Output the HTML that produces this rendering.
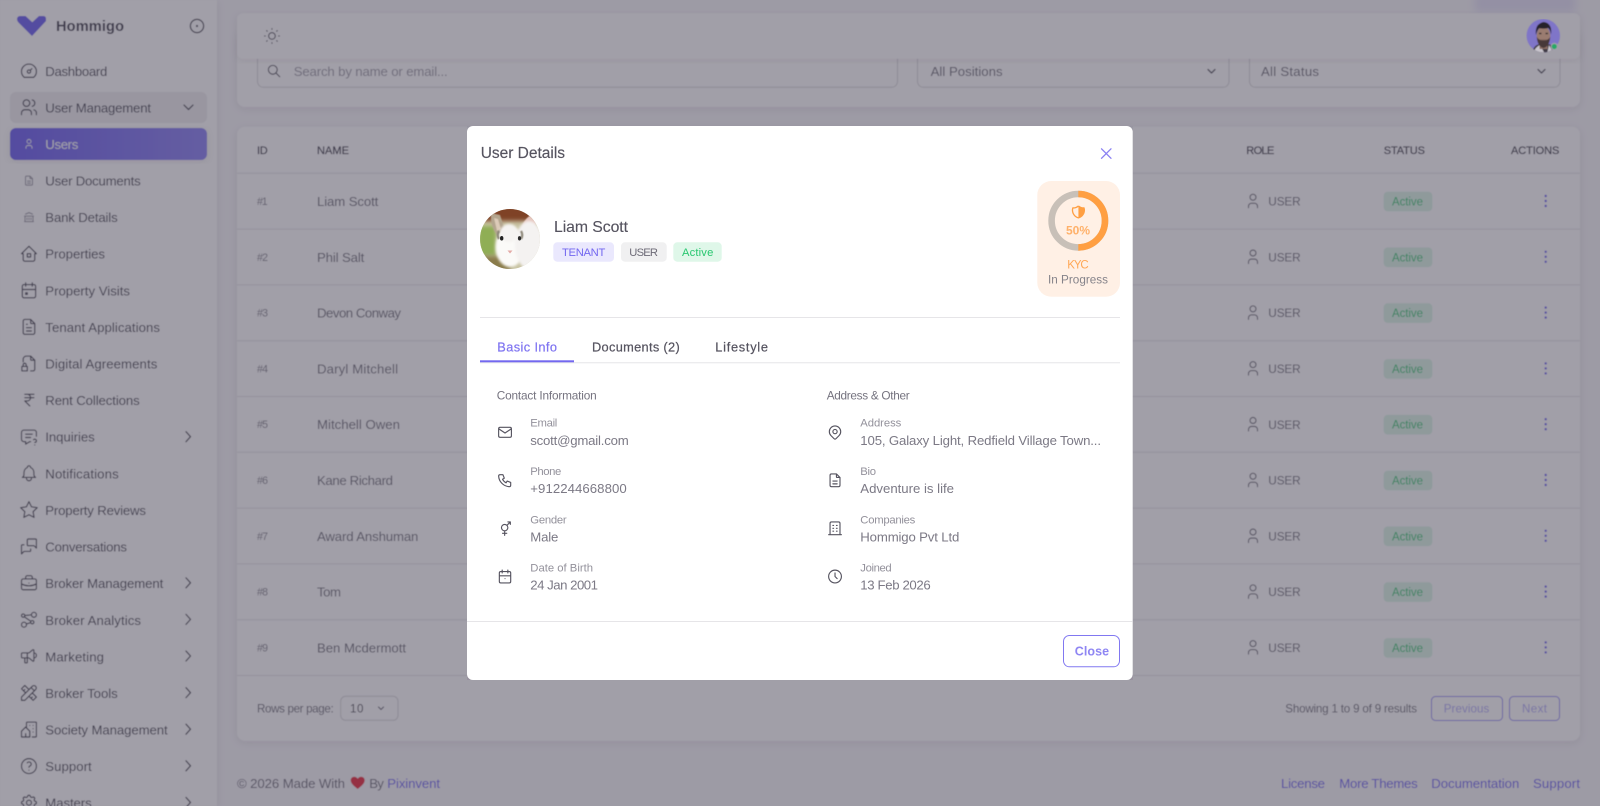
<!DOCTYPE html>
<html><head><meta charset="utf-8"><title>User Details</title>
<style>
html,body{margin:0;padding:0;width:1600px;height:806px;overflow:hidden;background:#f8f7fa}
svg{display:block;font-family:"Liberation Sans",sans-serif}
.i{fill:none;stroke:#4e4c5a;stroke-width:1.4;stroke-linecap:round;stroke-linejoin:round}
.s{fill:none;stroke:#6d6b77;stroke-width:1.4;stroke-linecap:round;stroke-linejoin:round}
.g{fill:none;stroke:#55535f;stroke-width:1.25;stroke-linecap:round;stroke-linejoin:round}
.m{fill:none;stroke:#55535f;stroke-width:1.6;stroke-linecap:round;stroke-linejoin:round}
.n{font-size:13.2px;fill:#4e4c5a}
.h{font-size:11px;fill:#4e4c5a;stroke:#4e4c5a;stroke-width:.25}
.t{font-size:13.2px;fill:#75737f}
.u{font-size:11.8px;fill:#75737f}
.id{font-size:10.6px;fill:#8a8893}
.a{font-size:11.5px;fill:#28c76f;fill-opacity:.9}
.sm{font-size:11.6px;fill:#75737f}
.l{font-size:11.3px;fill:#93919b}
.v{font-size:13.2px;fill:#7b7985}
.p{font-size:13.2px;fill:#7367f0}
.tb{font-size:12.8px;stroke-width:.2;letter-spacing:.3px}
.bd{font-size:11.2px}
.sec{font-size:11.8px;fill:#75737f}
</style></head><body>
<svg width="1600" height="806" viewBox="0 0 1600 806" xmlns="http://www.w3.org/2000/svg">
<defs>
<filter id="sh" x="-5%" y="-5%" width="110%" height="115%"><feDropShadow dx="0" dy="2" stdDeviation="4" flood-color="#2f2b3d" flood-opacity=".08"/></filter>
<filter id="ms" x="-5%" y="-5%" width="110%" height="110%"><feDropShadow dx="0" dy="3" stdDeviation="6" flood-color="#2f2b3d" flood-opacity=".22"/></filter>
<filter id="b4" x="-30%" y="-30%" width="160%" height="160%"><feGaussianBlur stdDeviation="4"/></filter>
<filter id="b2" x="-30%" y="-30%" width="160%" height="160%"><feGaussianBlur stdDeviation="2"/></filter>
<filter id="b1" x="-30%" y="-30%" width="160%" height="160%"><feGaussianBlur stdDeviation="1.2"/></filter>
<filter id="b05" x="-30%" y="-30%" width="160%" height="160%"><feGaussianBlur stdDeviation=".6"/></filter>
<filter id="soft" x="0" y="0" width="100%" height="100%"><feGaussianBlur stdDeviation=".4"/></filter>
<filter id="soft2" x="0" y="0" width="100%" height="100%"><feGaussianBlur stdDeviation=".22"/></filter>
<linearGradient id="act" x1="0" x2="1"><stop offset="0" stop-color="#7367f0"/><stop offset="1" stop-color="#9289f4"/></linearGradient>
<clipPath id="ca"><circle cx="510" cy="239" r="30"/></clipPath>
<clipPath id="cm"><circle cx="1543.3" cy="35.7" r="16.7"/></clipPath>
</defs>

<g filter="url(#soft)">
<rect width="1600" height="806" fill="#f8f7fa"/>
<rect x="1475" y="-6" width="100" height="18" fill="#e6e3f8" filter="url(#b4)"/>

<rect x="237" y="30" width="1343" height="77" rx="8" fill="#fff" filter="url(#sh)"/>
<rect x="257.5" y="45" width="640" height="42.3" rx="6" fill="#fff" stroke="#dcdbde"/>
<rect x="917.5" y="45" width="311.5" height="42.3" rx="6" fill="#fff" stroke="#dcdbde"/>
<rect x="1249.5" y="45" width="310.5" height="42.3" rx="6" fill="#fff" stroke="#dcdbde"/>
<g class="g" style="stroke-width:1.7" transform="translate(266.5,63.5) scale(.63)"><path d="M3 10a7 7 0 1 0 14 0a7 7 0 1 0-14 0M21 21l-6-6"/></g>
<text x="293.7" y="76.2" class="t" style="fill:#a3a1ab" textLength="154">Search by name or email...</text>
<text x="930.6" y="76.2" class="t" textLength="72">All Positions</text>
<text x="1261" y="76.2" class="t" textLength="58">All Status</text>
<path d="M1208 69.5l3.500 3.500l3.500-3.500M1538 69.500l3.500 3.500l3.500-3.500" class="g"/>

<rect x="237" y="13.3" width="1343" height="45.4" rx="6" fill="#fff" filter="url(#sh)"/>
<g class="g" transform="translate(262,26) scale(.83)"><path d="M8 12a4 4 0 1 0 8 0a4 4 0 1 0-8 0M3 12h1M12 3v1M20 12h1M12 20v1M5.6 5.6l.7.7M18.4 5.6l-.7.7M17.7 17.7l.7.7M6.3 17.7l-.7.7"/></g>

<rect x="237" y="126.7" width="1343" height="614" rx="8" fill="#fff" filter="url(#sh)"/>
<text x="257" y="154.2" class="h" textLength="10.7">ID</text>
<text x="317" y="154.2" class="h" textLength="32">NAME</text>
<text x="1246.3" y="154.2" class="h" textLength="28">ROLE</text>
<text x="1383.7" y="154.2" class="h" textLength="41.3">STATUS</text>
<text x="1511" y="154.2" class="h" textLength="48.3">ACTIONS</text>
<path d="M237 173.3H1580M237 229.1H1580M237 284.9H1580M237 340.7H1580M237 396.5H1580M237 452.3H1580M237 508.1H1580M237 563.9H1580M237 619.7H1580M237 675.5H1580" stroke="#e8e7ea" fill="none"/>

<g><text x="257" y="205" class="id" textLength="10.7">#1</text><text x="317" y="206" class="t" textLength="61.3">Liam Scott</text><g class="s" transform="translate(1244,192) scale(.75)"><path d="M8 7a4 4 0 1 0 8 0a4 4 0 1 0-8 0M6 21v-2a4 4 0 0 1 4-4h4a4 4 0 0 1 4 4v2"/></g><text x="1268.3" y="205.6" class="u" textLength="32.4">USER</text><rect x="1383.7" y="191.7" width="48.6" height="19.6" rx="4" fill="#def6e8"/><text x="1392" y="205.5" class="a" textLength="31">Active</text><path d="M1545.7 196v.01M1545.7 201v.01M1545.7 206v.01" stroke="#7367f0" stroke-width="2.4" stroke-linecap="round"/></g>
<g transform="translate(0,55.8)"><text x="257" y="205" class="id" textLength="11">#2</text><text x="317" y="206" class="t" textLength="47.3">Phil Salt</text><g class="s" transform="translate(1244,192) scale(.75)"><path d="M8 7a4 4 0 1 0 8 0a4 4 0 1 0-8 0M6 21v-2a4 4 0 0 1 4-4h4a4 4 0 0 1 4 4v2"/></g><text x="1268.3" y="205.6" class="u" textLength="32.4">USER</text><rect x="1383.7" y="191.7" width="48.6" height="19.6" rx="4" fill="#def6e8"/><text x="1392" y="205.5" class="a" textLength="31">Active</text><path d="M1545.7 196v.01M1545.7 201v.01M1545.7 206v.01" stroke="#7367f0" stroke-width="2.4" stroke-linecap="round"/></g>
<g transform="translate(0,111.6)"><text x="257" y="205" class="id" textLength="11">#3</text><text x="317" y="206" class="t" textLength="84">Devon Conway</text><g class="s" transform="translate(1244,192) scale(.75)"><path d="M8 7a4 4 0 1 0 8 0a4 4 0 1 0-8 0M6 21v-2a4 4 0 0 1 4-4h4a4 4 0 0 1 4 4v2"/></g><text x="1268.3" y="205.6" class="u" textLength="32.4">USER</text><rect x="1383.7" y="191.7" width="48.6" height="19.6" rx="4" fill="#def6e8"/><text x="1392" y="205.5" class="a" textLength="31">Active</text><path d="M1545.7 196v.01M1545.7 201v.01M1545.7 206v.01" stroke="#7367f0" stroke-width="2.4" stroke-linecap="round"/></g>
<g transform="translate(0,167.4)"><text x="257" y="205" class="id" textLength="11">#4</text><text x="317" y="206" class="t" textLength="81">Daryl Mitchell</text><g class="s" transform="translate(1244,192) scale(.75)"><path d="M8 7a4 4 0 1 0 8 0a4 4 0 1 0-8 0M6 21v-2a4 4 0 0 1 4-4h4a4 4 0 0 1 4 4v2"/></g><text x="1268.3" y="205.6" class="u" textLength="32.4">USER</text><rect x="1383.7" y="191.7" width="48.6" height="19.6" rx="4" fill="#def6e8"/><text x="1392" y="205.5" class="a" textLength="31">Active</text><path d="M1545.7 196v.01M1545.7 201v.01M1545.7 206v.01" stroke="#7367f0" stroke-width="2.4" stroke-linecap="round"/></g>
<g transform="translate(0,223.2)"><text x="257" y="205" class="id" textLength="11">#5</text><text x="317" y="206" class="t" textLength="83">Mitchell Owen</text><g class="s" transform="translate(1244,192) scale(.75)"><path d="M8 7a4 4 0 1 0 8 0a4 4 0 1 0-8 0M6 21v-2a4 4 0 0 1 4-4h4a4 4 0 0 1 4 4v2"/></g><text x="1268.3" y="205.6" class="u" textLength="32.4">USER</text><rect x="1383.7" y="191.7" width="48.6" height="19.6" rx="4" fill="#def6e8"/><text x="1392" y="205.5" class="a" textLength="31">Active</text><path d="M1545.7 196v.01M1545.7 201v.01M1545.7 206v.01" stroke="#7367f0" stroke-width="2.4" stroke-linecap="round"/></g>
<g transform="translate(0,279)"><text x="257" y="205" class="id" textLength="11">#6</text><text x="317" y="206" class="t" textLength="76">Kane Richard</text><g class="s" transform="translate(1244,192) scale(.75)"><path d="M8 7a4 4 0 1 0 8 0a4 4 0 1 0-8 0M6 21v-2a4 4 0 0 1 4-4h4a4 4 0 0 1 4 4v2"/></g><text x="1268.3" y="205.6" class="u" textLength="32.4">USER</text><rect x="1383.7" y="191.7" width="48.6" height="19.6" rx="4" fill="#def6e8"/><text x="1392" y="205.5" class="a" textLength="31">Active</text><path d="M1545.7 196v.01M1545.7 201v.01M1545.7 206v.01" stroke="#7367f0" stroke-width="2.4" stroke-linecap="round"/></g>
<g transform="translate(0,334.8)"><text x="257" y="205" class="id" textLength="11">#7</text><text x="317" y="206" class="t" textLength="101.4">Award Anshuman</text><g class="s" transform="translate(1244,192) scale(.75)"><path d="M8 7a4 4 0 1 0 8 0a4 4 0 1 0-8 0M6 21v-2a4 4 0 0 1 4-4h4a4 4 0 0 1 4 4v2"/></g><text x="1268.3" y="205.6" class="u" textLength="32.4">USER</text><rect x="1383.7" y="191.7" width="48.6" height="19.6" rx="4" fill="#def6e8"/><text x="1392" y="205.5" class="a" textLength="31">Active</text><path d="M1545.7 196v.01M1545.7 201v.01M1545.7 206v.01" stroke="#7367f0" stroke-width="2.4" stroke-linecap="round"/></g>
<g transform="translate(0,390.6)"><text x="257" y="205" class="id" textLength="11">#8</text><text x="317" y="206" class="t" textLength="24">Tom</text><g class="s" transform="translate(1244,192) scale(.75)"><path d="M8 7a4 4 0 1 0 8 0a4 4 0 1 0-8 0M6 21v-2a4 4 0 0 1 4-4h4a4 4 0 0 1 4 4v2"/></g><text x="1268.3" y="205.6" class="u" textLength="32.4">USER</text><rect x="1383.7" y="191.7" width="48.6" height="19.6" rx="4" fill="#def6e8"/><text x="1392" y="205.5" class="a" textLength="31">Active</text><path d="M1545.7 196v.01M1545.7 201v.01M1545.7 206v.01" stroke="#7367f0" stroke-width="2.4" stroke-linecap="round"/></g>
<g transform="translate(0,446.4)"><text x="257" y="205" class="id" textLength="11">#9</text><text x="317" y="206" class="t" textLength="89">Ben Mcdermott</text><g class="s" transform="translate(1244,192) scale(.75)"><path d="M8 7a4 4 0 1 0 8 0a4 4 0 1 0-8 0M6 21v-2a4 4 0 0 1 4-4h4a4 4 0 0 1 4 4v2"/></g><text x="1268.3" y="205.6" class="u" textLength="32.4">USER</text><rect x="1383.7" y="191.7" width="48.6" height="19.6" rx="4" fill="#def6e8"/><text x="1392" y="205.5" class="a" textLength="31">Active</text><path d="M1545.7 196v.01M1545.7 201v.01M1545.7 206v.01" stroke="#7367f0" stroke-width="2.4" stroke-linecap="round"/></g>

<text x="257" y="712.4" class="sm" textLength="76.7">Rows per page:</text>
<rect x="340.7" y="696.3" width="57.3" height="24" rx="5" fill="#fff" stroke="#dcdbde"/>
<text x="350" y="712.6" class="sm" style="fill:#55535f" textLength="13.5">10</text>
<path d="M378.5 707l2.5 2.5l2.5-2.5" class="s" style="stroke-width:1.1"/>
<text x="1285.3" y="712.4" class="sm" textLength="131.7">Showing 1 to 9 of 9 results</text>
<rect x="1431.5" y="696.5" width="71" height="24" rx="4" fill="#fff" stroke="#9a92f4"/>
<rect x="1509.5" y="696.5" width="50" height="24" rx="4" fill="#fff" stroke="#9a92f4"/>
<text x="1443.7" y="712.6" class="sm" style="fill:#b5b0f7" textLength="45.6">Previous</text>
<text x="1522" y="712.6" class="sm" style="fill:#b5b0f7" textLength="25">Next</text>

<text x="237" y="788" class="t" textLength="108">© 2026 Made With</text>
<path d="M357.7 789c-4-3.2-7-5.6-7-8.8c0-2 1.5-3.5 3.5-3.5c1.4 0 2.8.8 3.5 2c.7-1.2 2.1-2 3.5-2c2 0 3.5 1.5 3.5 3.5c0 3.2-3 5.6-7 8.8z" fill="#ea3546"/>
<text x="369.3" y="788" class="t" textLength="14.5">By</text>
<text x="387.3" y="788" class="p" textLength="52.7">Pixinvent</text>
<text x="1281" y="788" class="p" textLength="44">License</text>
<text x="1339.3" y="788" class="p" textLength="78.4">More Themes</text>
<text x="1431.3" y="788" class="p" textLength="88">Documentation</text>
<text x="1533" y="788" class="p" textLength="47">Support</text>

<rect x="0" y="0" width="217" height="806" fill="#fff" filter="url(#sh)"/>
<path d="M17 19a3 3 0 0 1 3-3h5.5l6.8 6.2L39 16h4.5a2.5 2.5 0 0 1 2.5 2.6V21L32 36L18.5 22.5q-1.5-1.5-1.5-3.5z" fill="#7367f0"/>
<text x="56" y="31" font-size="14.6" font-weight="700" fill="#4e4c5a" textLength="68">Hommigo</text>
<circle cx="197" cy="26" r="6.6" class="g"/><circle cx="197" cy="26" r="1.1" fill="#55535f"/>

<rect x="10" y="92" width="197" height="31" rx="6" fill="#f0eff1"/>
<rect x="10" y="128" width="197" height="32" rx="6" fill="url(#act)" filter="url(#sh)"/>

<g transform="translate(0,-.5) scale(1,.9982)">
<text x="45.3" y="76.4" class="n" textLength="62">Dashboard</text>
<text x="45.3" y="113" class="n" textLength="105.7">User Management</text>
<text x="45.3" y="149.7" class="n" style="fill:#fff" textLength="33">Users</text>
<text x="45.3" y="186.4" class="n" textLength="95.4">User Documents</text>
<text x="45.3" y="223" class="n" textLength="72.4">Bank Details</text>
<text x="45.3" y="259.7" class="n" textLength="59.7">Properties</text>
<text x="45.3" y="296.4" class="n" textLength="84.7">Property Visits</text>
<text x="45.3" y="333" class="n" textLength="114.7">Tenant Applications</text>
<text x="45.3" y="369.7" class="n" textLength="112">Digital Agreements</text>
<text x="45.3" y="406.4" class="n" textLength="94.4">Rent Collections</text>
<text x="45.3" y="443" class="n" textLength="49.4">Inquiries</text>
<text x="45.3" y="479.7" class="n" textLength="73.4">Notifications</text>
<text x="45.3" y="516.4" class="n" textLength="100.7">Property Reviews</text>
<text x="45.3" y="553" class="n" textLength="81.7">Conversations</text>
<text x="45.3" y="589.7" class="n" textLength="118">Broker Management</text>
<text x="45.3" y="626.4" class="n" textLength="95.7">Broker Analytics</text>
<text x="45.3" y="663" class="n" textLength="58.7">Marketing</text>
<text x="45.3" y="699.7" class="n" textLength="72.4">Broker Tools</text>
<text x="45.3" y="736.4" class="n" textLength="122.4">Society Management</text>
<text x="45.3" y="773" class="n" textLength="46.4">Support</text>
<text x="45.3" y="809.7" class="n" textLength="46.4">Masters</text>

<g class="i">
<g transform="translate(19,61.4) scale(.83)"><path d="M10 13a2 2 0 1 0 4 0a2 2 0 1 0-4 0M13.45 11.55L15.5 9.5M6.4 20a9 9 0 1 1 11.2 0z"/></g>
<g transform="translate(19,98) scale(.83)"><path d="M5 7a4 4 0 1 0 8 0a4 4 0 1 0-8 0M3 21v-2a4 4 0 0 1 4-4h4a4 4 0 0 1 4 4v2M16 3.13a4 4 0 0 1 0 7.75M21 21v-2a4 4 0 0 0-3-3.85"/></g>
<g transform="translate(19,244.7) scale(.83)"><path d="M5 12H3l9-9l9 9h-2M5 12v7a2 2 0 0 0 2 2h10a2 2 0 0 0 2-2v-7M10 12h4v4h-4z"/></g>
<g transform="translate(19,281.4) scale(.83)"><path d="M4 7a2 2 0 0 1 2-2h12a2 2 0 0 1 2 2v12a2 2 0 0 1-2 2H6a2 2 0 0 1-2-2zM16 3v4M8 3v4M4 11h16M8 15h2v2H8z"/></g>
<g transform="translate(19,318) scale(.83)"><path d="M14 3v4a1 1 0 0 0 1 1h4M17 21H7a2 2 0 0 1-2-2V5a2 2 0 0 1 2-2h7l5 5v11a2 2 0 0 1-2 2zM9 9h1M9 13h6M9 17h6"/></g>
<g transform="translate(19,354.7) scale(.83)"><path d="M9 3h5l5 5v11a2 2 0 0 1-2 2h-3M14 3v4a1 1 0 0 0 1 1h4M9 3a4 4 0 0 0-4 4v3M3.5 15.5h6.5v5.5H3.5zM5 15.5v-2a1.8 1.8 0 0 1 3.6 0v2"/></g>
<g transform="translate(19,391.4) scale(.83)"><path d="M18 5H7h3a4 4 0 0 1 0 8H7l6 6M7 9h11"/></g>
<g transform="translate(19,428) scale(.83)"><path d="M8 9h8M8 13h6M14 18h-1l-5 3v-3H6a3 3 0 0 1-3-3V7a3 3 0 0 1 3-3h12a3 3 0 0 1 3 3v4.5M19 22v.01M19 19a2 2 0 0 0 .914-3.782a1.98 1.98 0 0 0-2.414.483"/></g>
<g transform="translate(19,464.7) scale(.83)"><path d="M10 5a2 2 0 1 1 4 0a7 7 0 0 1 4 6v3a4 4 0 0 0 2 3H4a4 4 0 0 0 2-3v-3a7 7 0 0 1 4-6M9 17v1a3 3 0 0 0 6 0v-1"/></g>
<g transform="translate(19,501.4) scale(.83)"><path d="M12 17.75l-6.172 3.245l1.179-6.873l-5-4.867l6.9-1l3.086-6.253l3.086 6.253l6.9 1l-5 4.867l1.179 6.873z"/></g>
<g transform="translate(19,538) scale(.83)"><path d="M21 14l-3-3h-7a1 1 0 0 1-1-1V4a1 1 0 0 1 1-1h9a1 1 0 0 1 1 1v10M14 15v2a1 1 0 0 1-1 1H6l-3 3V11a1 1 0 0 1 1-1h2"/></g>
<g transform="translate(19,574.7) scale(.83)"><path d="M3 9a2 2 0 0 1 2-2h14a2 2 0 0 1 2 2v9a2 2 0 0 1-2 2H5a2 2 0 0 1-2-2zM8 7V5a2 2 0 0 1 2-2h4a2 2 0 0 1 2 2v2M12 12v.01M3 13a20 20 0 0 0 18 0"/></g>
<g transform="translate(19,611.4) scale(.83)"><path d="M3 7a2 2 0 1 0 4 0a2 2 0 1 0-4 0M14 15a2 2 0 1 0 4 0a2 2 0 1 0-4 0M15 6a3 3 0 1 0 6 0a3 3 0 1 0-6 0M3 18a3 3 0 1 0 6 0a3 3 0 1 0-6 0M9 17l5-1.5M6.5 8.5l7.81 5.37M7 7l8-1"/></g>
<g transform="translate(19,648) scale(.83)"><path d="M18 8a3 3 0 0 1 0 6M10 8v11a1 1 0 0 1-1 1H8a1 1 0 0 1-1-1v-5M12 8l4.524-3.77A.9.9 0 0 1 18 4.922v12.156a.9.9 0 0 1-1.476.692L12 14H4a1 1 0 0 1-1-1V9a1 1 0 0 1 1-1h8"/></g>
<g transform="translate(19,684.7) scale(.83)"><path d="M3 21h4L20 8a1.5 1.5 0 0 0-4-4L3 17v4M14.5 5.5l4 4M12 8L7 3L3 7l5 5M7 8L5.5 9.5M16 12l5 5l-4 4l-5-5M16 17l-1.5 1.5"/></g>
<g transform="translate(19,721.4) scale(.83)"><path d="M8 9l5 5v7H8v-4m0 4H3v-7l5-5m1 1V4a1 1 0 0 1 1-1h10a1 1 0 0 1 1 1v16a1 1 0 0 1-1 1h-4M13 7v.01M17 7v.01M17 11v.01M17 15v.01"/></g>
<g transform="translate(19,758) scale(.83)"><path d="M3 12a9 9 0 1 0 18 0a9 9 0 1 0-18 0M12 17v.01M12 13.5a1.5 1.5 0 0 1 1-1.5a2.6 2.6 0 1 0-3-4"/></g>
<g transform="translate(19,794.7) scale(.83)"><path d="M10.325 4.317c.426-1.756 2.924-1.756 3.35 0a1.724 1.724 0 0 0 2.573 1.066c1.543-.94 3.31.826 2.37 2.37a1.724 1.724 0 0 0 1.065 2.572c1.756.426 1.756 2.924 0 3.35a1.724 1.724 0 0 0-1.066 2.573c.94 1.543-.826 3.31-2.37 2.37a1.724 1.724 0 0 0-2.572 1.065c-.426 1.756-2.924 1.756-3.35 0a1.724 1.724 0 0 0-2.573-1.066c-1.543.94-3.31-.826-2.37-2.37a1.724 1.724 0 0 0-1.065-2.572c-1.756-.426-1.756-2.924 0-3.35a1.724 1.724 0 0 0 1.066-2.573c-.94-1.543.826-3.31 2.37-2.37c1 .608 2.296.07 2.572-1.065zM9 12a3 3 0 1 0 6 0a3 3 0 1 0-6 0"/></g>
</g>
<g class="i" style="stroke:#fff;stroke-width:1.6" transform="translate(23,138.7) scale(.5)"><path d="M8 7a4 4 0 1 0 8 0a4 4 0 1 0-8 0M6 21v-2a4 4 0 0 1 4-4h4a4 4 0 0 1 4 4v2"/></g>
<g class="i" style="stroke:#9c9aa5;stroke-width:2" transform="translate(23,175.4) scale(.5)"><path d="M14 3v4a1 1 0 0 0 1 1h4M17 21H7a2 2 0 0 1-2-2V5a2 2 0 0 1 2-2h7l5 5v11a2 2 0 0 1-2 2zM9 13h6M9 17h6"/></g>
<g class="i" style="stroke:#9c9aa5;stroke-width:2" transform="translate(23,212) scale(.5)"><path d="M3 21h18M3 10h18M5 6l7-3l7 3M4 10v11M20 10v11M8 14v3M12 14v3M16 14v3"/></g>
<path d="M184 105.7l4.500 4.500l4.500-4.500" class="g"/>
<g class="g"><path d="M186 433l4.500 5l-4.500 5M186 579.4l4.500 5l-4.500 5M186 616l4.500 5l-4.500 5M186 652.7l4.500 5l-4.500 5M186 689.4l4.500 5l-4.500 5M186 726l4.500 5l-4.500 5M186 762.7l4.500 5l-4.500 5M186 799.4l4.500 5l-4.500 5"/></g>
</g>
</g>

<rect width="1600" height="806" fill="#2f2b3d" opacity=".45"/>

<g filter="url(#soft)">
<g clip-path="url(#cm)">
<rect x="1526" y="19" width="36" height="34" fill="#7f75c8"/>
<path d="M1532 54q1-9 8-10l4 3l5-3q6 2 9 10z" fill="#3f3a44"/>
<path d="M1533 54q2-7 7-9l5 9zM1549 45l5 9h-7z" fill="#c9c5cc"/>
<rect x="1539.5" y="42" width="8" height="7" fill="#8a6d63"/>
<ellipse cx="1543.5" cy="36" rx="6.8" ry="9.5" fill="#9a7b70"/>
<path d="M1536.8 37q.7 9.5 6.700 11q6-1.500 6.700-11q-2 3.500-6.700 3.500t-6.700-3.500z" fill="#473837"/>
<path d="M1540 40h7" stroke="#6b5550" stroke-width=".8"/>
<path d="M1539 33.5h2.500M1545.5 33.5h2.500" stroke="#2b2528" stroke-width="1.2"/>
<path d="M1536 35q-1.500-11 7.500-13q9 1 7.500 12.500q-.8-5-2.800-6.500q-4 1.200-9 .3q-2 2-3.200 6.700z" fill="#26212a"/>
</g>
<circle cx="1554.3" cy="46.5" r="3.7" fill="#a3a1ae"/>
<circle cx="1554.3" cy="46.5" r="2.6" fill="#28a868"/>
</g>

<g filter="url(#soft2)">
<rect x="467" y="126" width="665.7" height="554" rx="6" fill="#fff" filter="url(#ms)"/>
<text x="480.7" y="158" font-size="15.5" fill="#55535f" stroke="#55535f" stroke-width=".15" textLength="84.3">User Details</text>
<path d="M1101.5 148.8l9.500 9.500m0-9.500l-9.500 9.500" stroke="#8a80f2" stroke-width="1.3" stroke-linecap="round" fill="none"/>

<g clip-path="url(#ca)">
<rect x="478" y="207" width="64" height="64" fill="#c9c4a4"/>
<rect x="482" y="203" width="56" height="18" fill="#7f4226" filter="url(#b2)"/>
<path d="M478 226h18v30h-18z" fill="#8fae55" filter="url(#b2)"/>
<path d="M476 256h34v16h-34z" fill="#8a7c4c" filter="url(#b2)"/>
<path d="M491 213l9 2l5 15l-8 5q-7-9-6-22z" fill="#b3a58e" filter="url(#b05)"/>
<path d="M494 218l4 1l3 10l-4 2z" fill="#dccbb8" filter="url(#b05)"/>
<path d="M520 233q3-15 13-19q5 2 3 9q-3 9-9 13z" fill="#e6c6be" filter="url(#b05)"/>
<ellipse cx="510" cy="247" rx="14.500" ry="20" fill="#fbfaf8" filter="url(#b1)"/>
<ellipse cx="509" cy="233" rx="9" ry="9" fill="#f5f3f1" filter="url(#b1)"/>
<ellipse cx="529" cy="245" rx="14" ry="24" fill="#f4f2f1" filter="url(#b1)"/>
<path d="M499 231q-2.500 4 0 8M521 231q2.500 4 0 8" stroke="#8d8779" stroke-width="2.200" fill="none" filter="url(#b05)"/>
<ellipse cx="501.7" cy="238.3" rx="1.7" ry="2.3" fill="#222"/>
<ellipse cx="519.5" cy="238.3" rx="1.6" ry="2.2" fill="#2c2c2c"/>
<path d="M507.5 250.5h5l-2.500 3z" fill="#e3aaa6"/>
</g>

<text x="554" y="232.2" font-size="15.8" fill="#55535f" stroke="#55535f" stroke-width=".12" textLength="74">Liam Scott</text>
<rect x="553.3" y="242.3" width="60.7" height="19.4" rx="4" fill="#eae8fd"/>
<rect x="621" y="242.3" width="45.7" height="19.4" rx="4" fill="#f0f0f1"/>
<rect x="673.3" y="242.3" width="48.4" height="19.4" rx="4" fill="#dff7e9"/>
<text x="562" y="255.8" class="bd" fill="#7367f0" textLength="43.3">TENANT</text>
<text x="629.3" y="255.8" class="bd" fill="#6d6b77" textLength="28.7">USER</text>
<text x="682" y="255.8" class="bd" fill="#28c76f" textLength="31.3">Active</text>

<rect x="1037.3" y="181" width="82.7" height="115.7" rx="14" fill="#fff0e5"/>
<circle cx="1078.3" cy="220.7" r="26.7" fill="none" stroke="#c8c0b8" stroke-width="6.6"/>
<path d="M1078.3 194a26.7 26.7 0 0 1 0 53.4" fill="none" stroke="#ff9f43" stroke-width="6.6"/>
<g transform="translate(1070.5,204) scale(.66)"><path d="M12 3a12 12 0 0 0 8.500 3a12 12 0 0 1-8.500 15a12 12 0 0 1-8.500-15a12 12 0 0 0 8.500-3" fill="none" stroke="#ff9f43" stroke-width="2" stroke-linejoin="round"/><path d="M12 3a12 12 0 0 0 8.500 3a12 12 0 0 1-8.500 15z" fill="#ff9f43"/></g>
<text x="1066" y="234.3" font-size="12" font-weight="700" fill="#ffb16a" textLength="24">50%</text>
<text x="1067.3" y="268.3" font-size="11.5" fill="#ffa755" textLength="21.4">KYC</text>
<text x="1048" y="283.3" font-size="11.7" fill="#85838a" textLength="60">In Progress</text>

<path d="M480 317.5H1120" stroke="#e6e5e8"/>
<path d="M480 362.7H1120" stroke="#e6e5e8"/>
<rect x="480" y="360.3" width="94" height="2" fill="#7367f0"/>
<text x="497.3" y="351.7" class="tb" fill="#7f74f1" stroke="#7f74f1" textLength="60">Basic Info</text>
<text x="592" y="351.7" class="tb" fill="#55535f" stroke="#55535f" textLength="88">Documents (2)</text>
<text x="715.3" y="351.7" class="tb" fill="#55535f" stroke="#55535f" textLength="53">Lifestyle</text>

<text x="496.7" y="399.3" class="sec" textLength="100">Contact Information</text>
<text x="826.7" y="399.3" class="sec" textLength="83">Address &amp; Other</text>

<text x="530.3" y="426.7" class="l" textLength="27">Email</text>
<text x="530.3" y="445" class="v" textLength="98.4">scott@gmail.com</text>
<text x="530.3" y="475" class="l" textLength="31">Phone</text>
<text x="530.3" y="493" class="v" textLength="96.4">+912244668800</text>
<text x="530.3" y="523.3" class="l" textLength="36.4">Gender</text>
<text x="530.3" y="541.5" class="v" textLength="28">Male</text>
<text x="530.3" y="571.3" class="l" textLength="62.7">Date of Birth</text>
<text x="530.3" y="589.7" class="v" textLength="67.7">24 Jan 2001</text>

<text x="860.3" y="426.7" class="l" textLength="41">Address</text>
<text x="860.3" y="445" class="v" textLength="240.7">105, Galaxy Light, Redfield Village Town...</text>
<text x="860.3" y="475" class="l" textLength="15.7">Bio</text>
<text x="860.3" y="493" class="v" textLength="93.7">Adventure is life</text>
<text x="860.3" y="523.3" class="l" textLength="55">Companies</text>
<text x="860.3" y="541.5" class="v" textLength="99">Hommigo Pvt Ltd</text>
<text x="860.3" y="571.3" class="l" textLength="31.4">Joined</text>
<text x="860.3" y="589.7" class="v" textLength="70.4">13 Feb 2026</text>

<g class="m">
<g transform="translate(496.5,423.8) scale(.71)"><path d="M3 7a2 2 0 0 1 2-2h14a2 2 0 0 1 2 2v10a2 2 0 0 1-2 2H5a2 2 0 0 1-2-2zM3 7l9 6l9-6"/></g>
<g transform="translate(496.5,471.8) scale(.71)"><path d="M5 4h4l2 5l-2.500 1.500a11 11 0 0 0 5 5l1.500-2.500l5 2v4a2 2 0 0 1-2 2a16 16 0 0 1-15-15a2 2 0 0 1 2-2"/></g>
<g transform="translate(496.5,519.8) scale(.71)"><path d="M7 11a4.500 4.500 0 1 0 9 0a4.500 4.500 0 1 0-9 0M15 7.500L19.500 3M16 3h3.500v3.500M11.500 15.500V22M8.500 19h6"/></g>
<g transform="translate(496.5,568) scale(.71)"><path d="M4 7a2 2 0 0 1 2-2h12a2 2 0 0 1 2 2v12a2 2 0 0 1-2 2H6a2 2 0 0 1-2-2zM16 3v4M8 3v4M4 11h16M12 15v.01"/></g>
<g transform="translate(826.5,423.8) scale(.71)"><path d="M9 11a3 3 0 1 0 6 0a3 3 0 1 0-6 0M17.657 16.657L13.414 20.900a2 2 0 0 1-2.827 0l-4.244-4.243a8 8 0 1 1 11.314 0z"/></g>
<g transform="translate(826.5,471.8) scale(.71)"><path d="M14 3v4a1 1 0 0 0 1 1h4M17 21H7a2 2 0 0 1-2-2V5a2 2 0 0 1 2-2h7l5 5v11a2 2 0 0 1-2 2zM9 13h6M9 17h6"/></g>
<g transform="translate(826.5,519.8) scale(.71)"><path d="M3 21h18M5 21V5a2 2 0 0 1 2-2h10a2 2 0 0 1 2 2v16M9 8h1M9 12h1M9 16h1M14 8h1M14 12h1M14 16h1"/></g>
<g transform="translate(826.5,568) scale(.71)"><path d="M3 12a9 9 0 1 0 18 0a9 9 0 1 0-18 0M12 7v5l3 3"/></g>
</g>

<path d="M467 621.5H1132.7" stroke="#e6e5e8"/>
<rect x="1063.5" y="635.5" width="56" height="31.3" rx="6" fill="#fff" stroke="#8178f1"/>
<text x="1074.7" y="655.7" font-size="12.5" font-weight="700" fill="#8f86f3" textLength="34.4">Close</text>
</g>
</svg>
</body></html>
